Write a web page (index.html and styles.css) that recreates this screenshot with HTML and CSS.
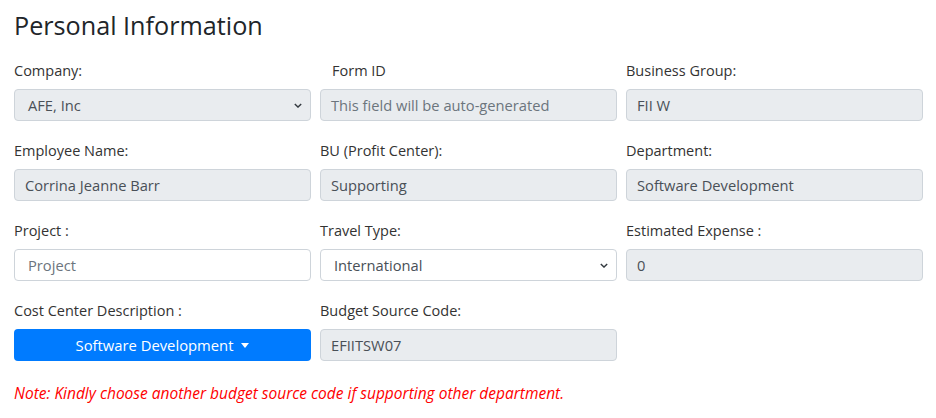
FILE: index.html
```html
<!DOCTYPE html>
<html>
<head>
<meta charset="utf-8">
<link rel="stylesheet" href="styles.css">
</head>
<body>
<div class="page">
  <h1 class="title">Personal Information</h1>
  <div class="grid">
    <div class="field">
      <label class="label">Company:</label>
      <div class="control disabled select indent"><span>AFE, Inc</span><svg class="chev" viewBox="0 0 10 6"><path d="M1 1l4 4 4-4" fill="none" stroke="#343a40" stroke-width="1.7"/></svg></div>
    </div>
    <div class="field">
      <label class="label indent-label">Form ID</label>
      <div class="control disabled"><span class="ph">This field will be auto-generated</span></div>
    </div>
    <div class="field">
      <label class="label">Business Group:</label>
      <div class="control disabled"><span>FII W</span></div>
    </div>

    <div class="field">
      <label class="label">Employee Name:</label>
      <div class="control disabled"><span>Corrina Jeanne Barr</span></div>
    </div>
    <div class="field">
      <label class="label">BU (Profit Center):</label>
      <div class="control disabled"><span>Supporting</span></div>
    </div>
    <div class="field">
      <label class="label">Department:</label>
      <div class="control disabled"><span>Software Development</span></div>
    </div>

    <div class="field">
      <label class="label">Project :</label>
      <div class="control indent"><span class="ph">Project</span></div>
    </div>
    <div class="field">
      <label class="label">Travel Type:</label>
      <div class="control select indent"><span>International</span><svg class="chev" viewBox="0 0 10 6"><path d="M1 1l4 4 4-4" fill="none" stroke="#343a40" stroke-width="1.7"/></svg></div>
    </div>
    <div class="field">
      <label class="label">Estimated Expense :</label>
      <div class="control disabled"><span>0</span></div>
    </div>

    <div class="field">
      <label class="label">Cost Center Description :</label>
      <div class="btn">Software Development<span class="caret"></span></div>
    </div>
    <div class="field">
      <label class="label">Budget Source Code:</label>
      <div class="control disabled"><span>EFIITSW07</span></div>
    </div>
  </div>
  <p class="note">Note: Kindly choose another budget source code if supporting other department.</p>
</div>
</body>
</html>
```
FILE: styles.css
```css
* { box-sizing: border-box; }
html, body { margin: 0; padding: 0; background: #fff; }
body { font-family: "Open Sans", "Noto Sans", sans-serif; color: #212529; }
.page { padding: 7px 13px 0 14px; }
.title { font-size: 25.2px; font-weight: 400; margin: 0; line-height: 36px; color: #212529; }
.grid { display: grid; grid-template-columns: repeat(3, 297px); column-gap: 9px; row-gap: 20px; margin-top: 18px; }
.field { display: flex; flex-direction: column; }
.label { font-size: 14.5px; line-height: 20px; height: 20px; margin-bottom: 8px; color: #333; white-space: nowrap; }
.indent-label { padding-left: 12px; }
.control { height: 32px; border: 1px solid #ced4da; border-radius: 4px; background: #fff; display: flex; align-items: center; padding: 0 10px; font-size: 14.7px; color: #495057; white-space: nowrap; }
.control.disabled { background: #e9ecef; }
.control.indent { padding-left: 13px; }
.control.select { justify-content: space-between; padding-right: 8px; }
.ph { color: #6c757d; }
.chev { width: 8px; height: 5px; }
.btn { height: 32px; border-radius: 4px; background: #007bff; color: #fff; font-size: 14.8px; display: flex; align-items: center; justify-content: center; }
.caret { display: inline-block; margin-left: 8px; border-top: 5px solid #fff; border-left: 4.5px solid transparent; border-right: 4.5px solid transparent; margin-top: 1px; }
.note { margin: 22px 0 0; color: #ff0000; font-style: italic; font-size: 15.5px; line-height: 20px; white-space: nowrap; }
```
